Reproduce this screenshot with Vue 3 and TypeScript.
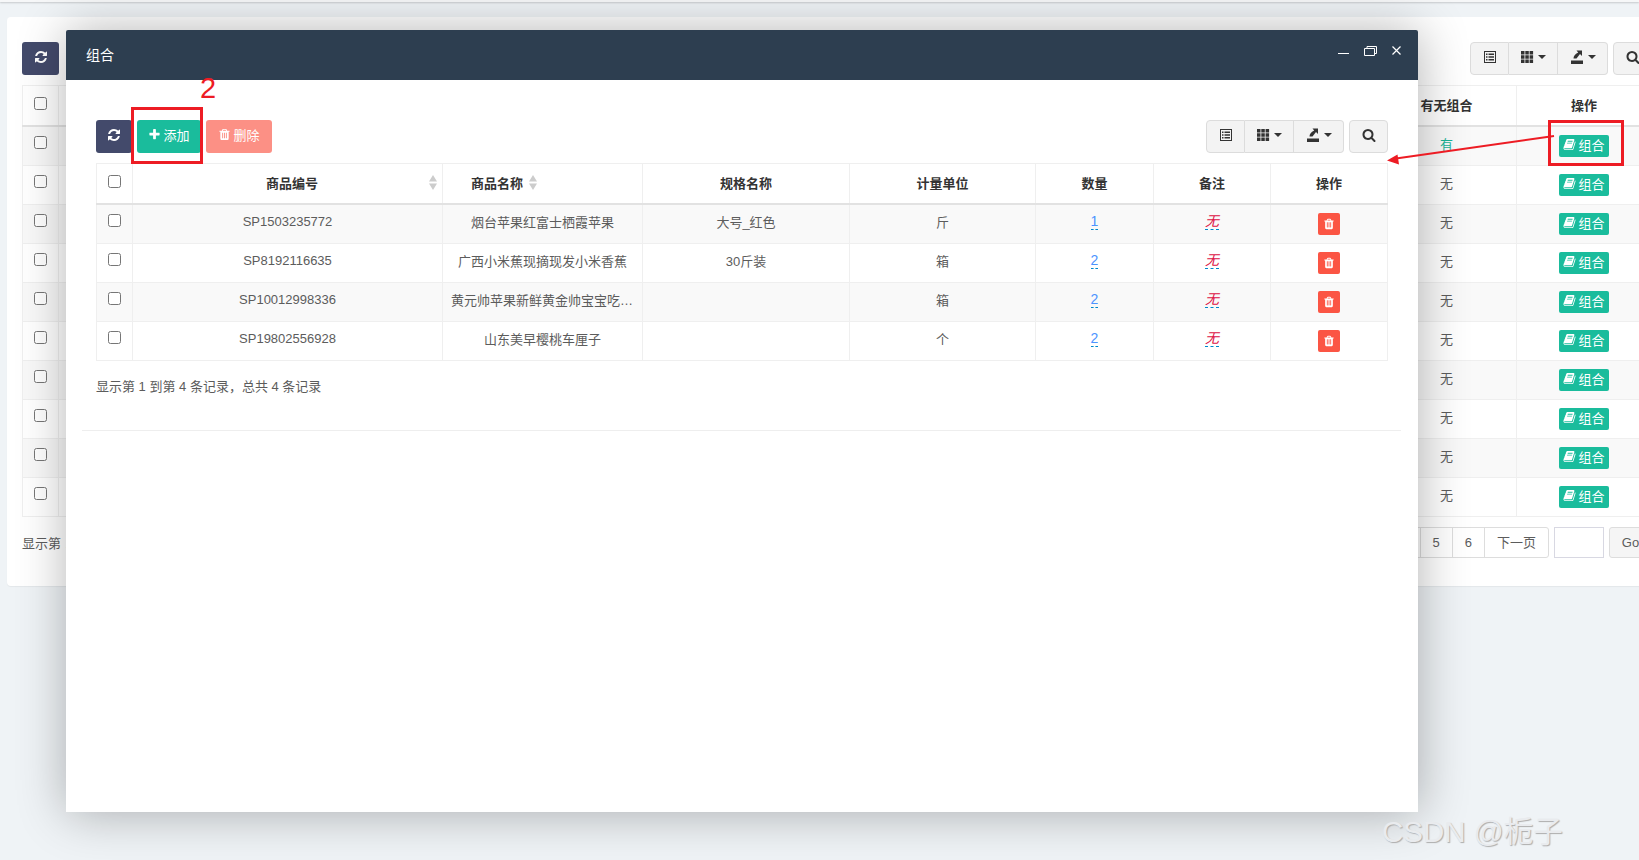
<template>
  <div class="page">
    <div class="topbar"></div>

    <!-- list page behind the dialog -->
    <div class="panel">
      <div class="toolbar">
        <button class="btn btn-refresh"><svg class="ic" viewBox="0 0 1792 1792"><path :d="icons.refresh" /></svg></button>
        <div class="tools">
          <div class="btn-group">
            <button class="btn-tool"><svg class="ic-tool" viewBox="0 0 14 14"><path :d="listAlt" fill-rule="evenodd" /></svg></button>
            <button class="btn-tool"><svg class="ic-tool" viewBox="0 0 14 14"><path :d="thGrid" /></svg><i class="caret"></i></button>
            <button class="btn-tool"><svg class="ic-tool" viewBox="0 0 14 14"><path :d="exportIc" /></svg><i class="caret"></i></button>
          </div>
          <button class="btn-tool single"><svg class="ic-tool" viewBox="0 0 1792 1792"><path :d="icons.search" /></svg></button>
        </div>
      </div>
      <table class="grid back">
        <colgroup><col style="width:36px" /><col /><col style="width:140px" /><col style="width:135px" /></colgroup>
        <thead>
          <tr><th><input type="checkbox" /></th><th></th><th>有无组合</th><th>操作</th></tr>
        </thead>
        <tbody>
          <tr v-for="(v, i) in backRows" :key="i">
            <td><input type="checkbox" /></td>
            <td></td>
            <td :class="{ yes: v === '有' }">{{ v }}</td>
            <td><button class="btn-combo"><svg class="ic-sm" viewBox="0 0 1792 1792"><path :d="icons.book" /></svg>组合</button></td>
          </tr>
        </tbody>
      </table>
      <div class="back-foot">
        <span class="back-count">显示第 1 到第 10 条记录，总共 58 条记录</span>
        <div class="pager">
          <div class="pages">
            <a v-for="p in pages" :key="p">{{ p }}</a>
          </div>
          <input class="go-input" type="text" />
          <button class="btn-go">Go</button>
        </div>
      </div>
    </div>

    <!-- dialog -->
    <div class="modal">
      <div class="modal-head">
        <span class="modal-title">组合</span>
        <div class="win-btns">
          <svg width="11" height="10" viewBox="0 0 11 10"><path d="M0 7.5h11" stroke="#fff" fill="none" /></svg>
          <svg width="13" height="10" viewBox="0 0 13 10"><path d="M.5 2.5h10v7H.5zM3 2.5V.5h9.5v7h-2" stroke="#fff" fill="none" /></svg>
          <svg width="9" height="10" viewBox="0 0 9 10"><path d="M.5 .5l8 8M8.5 .5l-8 8" stroke="#fff" stroke-width="1.2" fill="none" /></svg>
        </div>
      </div>
      <div class="modal-body">
        <div class="toolbar">
          <div class="actions">
            <button class="btn btn-refresh"><svg class="ic" viewBox="0 0 1792 1792"><path :d="icons.refresh" /></svg></button>
            <button class="btn btn-add"><svg class="ic-sm" viewBox="0 0 1792 1792"><path :d="icons.plus" /></svg>添加</button>
            <button class="btn btn-del"><svg class="ic-sm" viewBox="0 0 1792 1792"><path :d="icons.trash" /></svg>删除</button>
          </div>
          <div class="tools">
            <div class="btn-group">
              <button class="btn-tool"><svg class="ic-tool" viewBox="0 0 14 14"><path :d="listAlt" fill-rule="evenodd" /></svg></button>
              <button class="btn-tool"><svg class="ic-tool" viewBox="0 0 14 14"><path :d="thGrid" /></svg><i class="caret"></i></button>
              <button class="btn-tool"><svg class="ic-tool" viewBox="0 0 14 14"><path :d="exportIc" /></svg><i class="caret"></i></button>
            </div>
            <button class="btn-tool single"><svg class="ic-tool" viewBox="0 0 1792 1792"><path :d="icons.search" /></svg></button>
          </div>
        </div>
        <table class="grid">
          <colgroup>
            <col style="width:36px" /><col style="width:310px" /><col style="width:200px" /><col style="width:207px" />
            <col style="width:186px" /><col style="width:118px" /><col style="width:117px" /><col style="width:117px" />
          </colgroup>
          <thead>
            <tr>
              <th><input type="checkbox" /></th>
              <th><div class="th-sort first"><span>商品编号</span><svg class="sort" viewBox="0 0 8 15"><path d="M4 0l4 6.500H0zM4 15l4-6.500H0z" /></svg></div></th>
              <th><div class="th-sort second"><span>商品名称</span><svg class="sort" viewBox="0 0 8 15"><path d="M4 0l4 6.500H0zM4 15l4-6.500H0z" /></svg></div></th>
              <th>规格名称</th>
              <th>计量单位</th>
              <th>数量</th>
              <th>备注</th>
              <th>操作</th>
            </tr>
          </thead>
          <tbody>
            <tr v-for="row in rows" :key="row.code">
              <td><input type="checkbox" /></td>
              <td>{{ row.code }}</td>
              <td class="clip">{{ row.name }}</td>
              <td>{{ row.spec }}</td>
              <td>{{ row.unit }}</td>
              <td><a class="editable qty">{{ row.qty }}</a></td>
              <td><a class="editable empty">无</a></td>
              <td><button class="btn-trash"><svg class="ic-sm flat" viewBox="0 0 1792 1792"><path :d="icons.trash" /></svg></button></td>
            </tr>
          </tbody>
        </table>
        <div class="summary">显示第 1 到第 4 条记录，总共 4 条记录</div>
      </div>
    </div>

    <!-- red marks drawn on top of the screenshot -->
    <svg class="marks" width="1639" height="860" viewBox="0 0 1639 860">
      <rect x="132.5" y="108.5" width="69" height="54" fill="none" stroke="#ed1c24" stroke-width="3" />
      <rect x="1549.5" y="121.5" width="73" height="43" fill="none" stroke="#ed1c24" stroke-width="3" />
      <path d="M1554 136L1396 158.5" stroke="#ed1c24" stroke-width="2" fill="none" />
      <path d="M1387 160.500l10.500-6 1.500 10z" fill="#ed1c24" />
    </svg>
    <span class="mark-num">2</span>
    <span class="watermark">CSDN @栀子</span>
  </div>
</template>

<script setup lang="ts">
interface Row {
  code: string
  name: string
  spec: string
  unit: string
  qty: number
}

// font awesome 4 outlines
const icons = {
  refresh:
    'M1639 1056q0 5-1 7-64 268-268 434.5t-478 166.5q-146 0-282.5-55t-243.5-157l-129 129q-19 19-45 19t-45-19-19-45v-448q0-26 19-45t45-19h448q26 0 45 19t19 45-19 45l-137 137q71 66 161 102t187 36q134 0 250-65t186-179q11-17 53-117 8-23 30-23h192q13 0 22.5 9.5t9.5 22.500zm25-800v448q0 26-19 45t-45 19h-448q-26 0-45-19t-19-45 19-45l138-138q-148-137-349-137-134 0-250 65t-186 179q-11 17-53 117-8 23-30 23h-199q-13 0-22.500-9.500t-9.500-22.500v-7q65-268 270-434.500t480-166.500q146 0 284 55.500t245 156.500l130-129q19-19 45-19t45 19 19 45z',
  plus:
    'M1600 736v192q0 40-28 68t-68 28h-416v416q0 40-28 68t-68 28h-192q-40 0-68-28t-28-68v-416h-416q-40 0-68-28t-28-68v-192q0-40 28-68t68-28h416v-416q0-40 28-68t68-28h192q40 0 68 28t28 68v416h416q40 0 68 28t28 68z',
  trash:
    'M704 1376v-704q0-14-9-23t-23-9h-64q-14 0-23 9t-9 23v704q0 14 9 23t23 9h64q14 0 23-9t9-23zm256 0v-704q0-14-9-23t-23-9h-64q-14 0-23 9t-9 23v704q0 14 9 23t23 9h64q14 0 23-9t9-23zm256 0v-704q0-14-9-23t-23-9h-64q-14 0-23 9t-9 23v704q0 14 9 23t23 9h64q14 0 23-9t9-23zm-544-992h448l-48-117q-7-9-17-11h-317q-10 2-17 11zm928 32v64q0 14-9 23t-23 9h-96v948q0 83-47 143.500t-113 60.500h-832q-66 0-113-58.500t-47-141.500v-952h-96q-14 0-23-9t-9-23v-64q0-14 9-23t23-9h309l70-167q15-37 54-63t79-26h320q40 0 79 26t54 63l70 167h309q14 0 23 9t9 23z',
  book:
    'M1703 478q40 57 18 129l-275 906q-19 64-76.500 107.500t-122.500 43.500h-923q-77 0-148.500-53.500t-99.500-131.500q-24-67-2-127 0-4 3-27t4-37q1-8-3-21.500t-3-19.500q2-11 8-21t16.500-23.500 16.500-23.500q23-38 45-91.500t30-91.500q3-10 .5-30t-.5-28q3-11 17-28t17-23q21-36 42-92t25-90q1-9-2.500-32t.5-28q4-13 22-30.500t22-22.500q19-26 42.500-84.500t27.500-96.500q1-8-3-25.500t-2-26.500q2-8 9-18t18-23 17-21q8-12 16.500-30.500t15-35 16-36 19.500-32 26.500-23.500 36-11.500 47.500 5.500l-1 3q38-9 51-9h761q74 0 114 56t18 130l-274 906q-36 119-71.500 153.500t-128.500 34.500h-869q-27 0-38 15-11 16-1 43 24 70 144 70h923q29 0 56-15.500t35-41.500l300-987q7-22 5-57 38 15 59 43zm-1064 2q-4 13 2 22.500t20 9.500h608q13 0 25.500-9.500t16.500-22.500l21-64q4-13-2-22.500t-20-9.500h-608q-13 0-25.500 9.500t-16.500 22.500zm-83 256q-4 13 2 22.500t20 9.500h608q13 0 25.500-9.500t16.500-22.500l21-64q4-13-2-22.500t-20-9.500h-608q-13 0-25.500 9.500t-16.500 22.500z',
  search:
    'M1216 832q0-185-131.500-316.500t-316.500-131.500-316.500 131.500-131.500 316.500 131.500 316.500 316.500 131.500 316.500-131.500 131.500-316.500zm512 832q0 52-38 90t-90 38q-54 0-90-38l-343-342q-179 124-399 124-143 0-273.500-55.500t-225-150-150-225-55.500-273.500 55.500-273.500 150-225 225-150 273.500-55.500 273.500 55.500 225 150 150 225 55.500 273.500q0 220-124 399l343 343q37 37 37 90z',
}

const listAlt =
  'M1 1h12v12H1zM2 2v10h10V2zM3 3.500h1.500V5H3zM5.500 3.500H11V5H5.500zM3 6.200h1.500v1.500H3zM5.500 6.200H11v1.500H5.500zM3 9h1.500v1.500H3zM5.500 9H11v1.500H5.500z'
const thGrid =
  'M1 1h3.500v3.500H1zM5.300 1h3.500v3.500H5.300zM9.600 1h3.500v3.500H9.600zM1 5.300h3.500v3.500H1zM5.300 5.300h3.500v3.500H5.300zM9.600 5.300h3.500v3.500H9.600zM1 9.600h3.500v3.500H1zM5.300 9.600h3.500v3.500H5.300zM9.600 9.600h3.500v3.500H9.600z'
const exportIc =
  'M1 10.500h12V14H1zM6.500 0.500H12V6L10 4 6.500 8.500H3.500C3.500 6 5 4 8.200 2.500z'

const rows: Row[] = [
  { code: 'SP1503235772', name: '烟台苹果红富士栖霞苹果', spec: '大号_红色', unit: '斤', qty: 1 },
  { code: 'SP8192116635', name: '广西小米蕉现摘现发小米香蕉', spec: '30斤装', unit: '箱', qty: 2 },
  { code: 'SP10012998336', name: '黄元帅苹果新鲜黄金帅宝宝吃苹果水果', spec: '', unit: '箱', qty: 2 },
  { code: 'SP19802556928', name: '山东美早樱桃车厘子', spec: '', unit: '个', qty: 2 },
]

const backRows = ['有', '无', '无', '无', '无', '无', '无', '无', '无', '无']
const pages = ['上一页', '1', '2', '3', '4', '5', '6', '下一页']
</script>

<style>
html,
body {
  margin: 0;
  overflow: hidden;
  background: #eff3f6;
}
</style>

<style scoped>
.page {
  position: relative;
  width: 1639px;
  height: 860px;
  overflow: hidden;
  background: #eff3f6;
  font-family: "Liberation Sans", "Noto Sans CJK SC", sans-serif;
  font-size: 13px;
  color: #5c5c5c;
}

.topbar {
  height: 2px;
  background: #f6f7f8;
  box-shadow: 0 1px 2px rgba(0, 0, 0, 0.18);
}

.panel {
  width: 1660px;
  height: 569px;
  box-sizing: border-box;
  margin: 15px 0 0 7px;
  padding: 25px 0 0 15px;
  background: #fff;
  border-radius: 4px;
  box-shadow: 0 1px 1px rgba(0, 0, 0, 0.05);
}

.toolbar {
  display: flex;
  justify-content: space-between;
  height: 33px;
  margin-bottom: 10px;
}

.panel .toolbar,
.panel .grid,
.back-foot {
  width: 1630px;
}

.actions,
.tools {
  display: flex;
  gap: 5px;
}

button {
  font-family: inherit;
  font-size: 13px;
  cursor: pointer;
}

.btn {
  display: flex;
  align-items: center;
  justify-content: center;
  height: 33px;
  padding: 0 0 4px;
  border: 0;
  border-radius: 3px;
  color: #fff;
}

.btn-refresh {
  width: 36px;
  background: #434a6b;
}

.panel .btn-refresh {
  width: 37px;
}

.btn-add {
  width: 64px;
  background: #1abc9c;
}

.btn-del {
  width: 66px;
  background: #fb5544;
  opacity: 0.65;
}

.ic {
  width: 14px;
  height: 14px;
  fill: #fff;
}

.ic-sm {
  width: 13px;
  height: 13px;
  margin-right: 2px;
  fill: #fff;
}

.ic-sm.flat {
  margin: 0;
  width: 12px;
  height: 12px;
}

.btn-group {
  display: flex;
}

.btn-tool {
  display: flex;
  align-items: center;
  justify-content: center;
  gap: 4px;
  box-sizing: border-box;
  width: 49px;
  height: 33px;
  padding: 0 0 3px;
  background: #f3f3f3;
  border: 1px solid #dcdcdc;
  border-left: 0;
}

.btn-group .btn-tool:first-child {
  width: 39px;
  border-left: 1px solid #dcdcdc;
  border-radius: 4px 0 0 4px;
}

.btn-group .btn-tool:last-child {
  width: 50px;
  border-radius: 0 4px 4px 0;
}

.btn-tool.single {
  width: 39px;
  border-left: 1px solid #dcdcdc;
  border-radius: 4px;
}

.ic-tool {
  width: 14px;
  height: 14px;
  fill: #333;
}

.caret {
  display: block;
  border-top: 4px solid #333;
  border-left: 4px solid transparent;
  border-right: 4px solid transparent;
}

.grid {
  width: 1291px;
  table-layout: fixed;
  border-collapse: collapse;
  border: 1px solid #efefef;
}

.grid th {
  height: 36px;
  padding: 0 0 3px;
  font-weight: bold;
  text-align: center;
  color: #333;
  background: #fff;
  border: 1px solid #efefef;
  border-bottom: 2px solid #e2e2e2;
}

.grid td {
  height: 32px;
  padding: 0 8px 6px;
  text-align: center;
  border: 1px solid #efefef;
}

.grid tbody tr:nth-child(odd) td {
  background: #f9f9f9;
}

.grid input[type="checkbox"] {
  display: block;
  margin: -2px auto 0;
}

.clip {
  white-space: nowrap;
  overflow: hidden;
  text-overflow: ellipsis;
}

.th-sort {
  display: flex;
  align-items: center;
}

.th-sort.first {
  justify-content: space-between;
  padding: 0 5px 0 133px;
}

.th-sort.second {
  gap: 6px;
  padding-left: 28px;
}

.sort {
  width: 8px;
  height: 15px;
  margin-top: 1px;
  fill: #ccc;
}

.editable {
  display: inline-block;
  line-height: 16px;
  border-bottom: 1px dashed #0088cc;
}

.qty {
  color: #4d94ff;
  font-size: 14px;
}

.empty {
  color: #dd1144;
  font-style: italic;
  font-size: 14px;
}

.btn-trash {
  display: inline-flex;
  align-items: center;
  justify-content: center;
  width: 22px;
  height: 22px;
  margin-top: 6px;
  padding: 0;
  border: 0;
  border-radius: 2px;
  background: #fb5544;
  vertical-align: middle;
}

.btn-combo {
  display: inline-flex;
  align-items: center;
  justify-content: center;
  width: 50px;
  height: 22px;
  margin-top: 6px;
  padding: 0 0 3px;
  border: 0;
  border-radius: 2px;
  background: #1abc9c;
  color: #fff;
  font-size: 13px;
  vertical-align: middle;
}

.yes {
  color: #1ab394;
}

.back-foot {
  display: flex;
  justify-content: space-between;
  align-items: center;
  margin-top: 10px;
}

.back-count {
  word-spacing: 1px;
}

.pager {
  display: flex;
  align-items: center;
  gap: 5px;
}

.pages {
  display: flex;
  border: 1px solid #ddd;
  border-radius: 3px;
}

.pages a {
  display: block;
  padding: 0 12px;
  line-height: 29px;
  border-left: 1px solid #ddd;
}

.pages a:first-child {
  border-left: 0;
}

.go-input {
  box-sizing: border-box;
  width: 50px;
  height: 31px;
  border: 1px solid #d8d8e2;
  padding: 0;
}

.btn-go {
  height: 31px;
  width: 43px;
  padding: 0;
  background: #f5f5f5;
  border: 1px solid #ddd;
  border-radius: 3px;
  color: #5c5c5c;
}

.modal {
  position: absolute;
  left: 66px;
  top: 30px;
  width: 1352px;
  height: 782px;
  background: #fff;
  border-radius: 2px 2px 0 0;
  box-shadow: 1px 1px 50px rgba(0, 0, 0, 0.3);
}

.modal-head {
  display: flex;
  justify-content: space-between;
  height: 50px;
  padding: 0 17px 0 20px;
  background: #2d3e50;
  border-radius: 2px 2px 0 0;
  color: #fff;
}

.modal-title {
  font-size: 14px;
  line-height: 50px;
}

.win-btns {
  display: flex;
  gap: 15px;
  padding-top: 16px;
}

.modal-body {
  height: 351px;
  box-sizing: border-box;
  margin: 0 17px 0 16px;
  padding: 40px 13px 0 14px;
  border-bottom: 1px solid #eeeeee;
}

.summary {
  margin-top: 17px;
  line-height: 18px;
}

.marks {
  position: absolute;
  left: 0;
  top: 0;
  pointer-events: none;
}

.mark-num {
  position: absolute;
  left: 200px;
  top: 72px;
  font-size: 29px;
  line-height: 33px;
  color: #ed1c24;
}

.watermark {
  position: absolute;
  left: 1382px;
  top: 813px;
  font-size: 29.5px;
  line-height: 38px;
  color: #e9ebee;
  text-shadow: 1px 1px 1px #adadad;
  white-space: nowrap;
}
</style>
